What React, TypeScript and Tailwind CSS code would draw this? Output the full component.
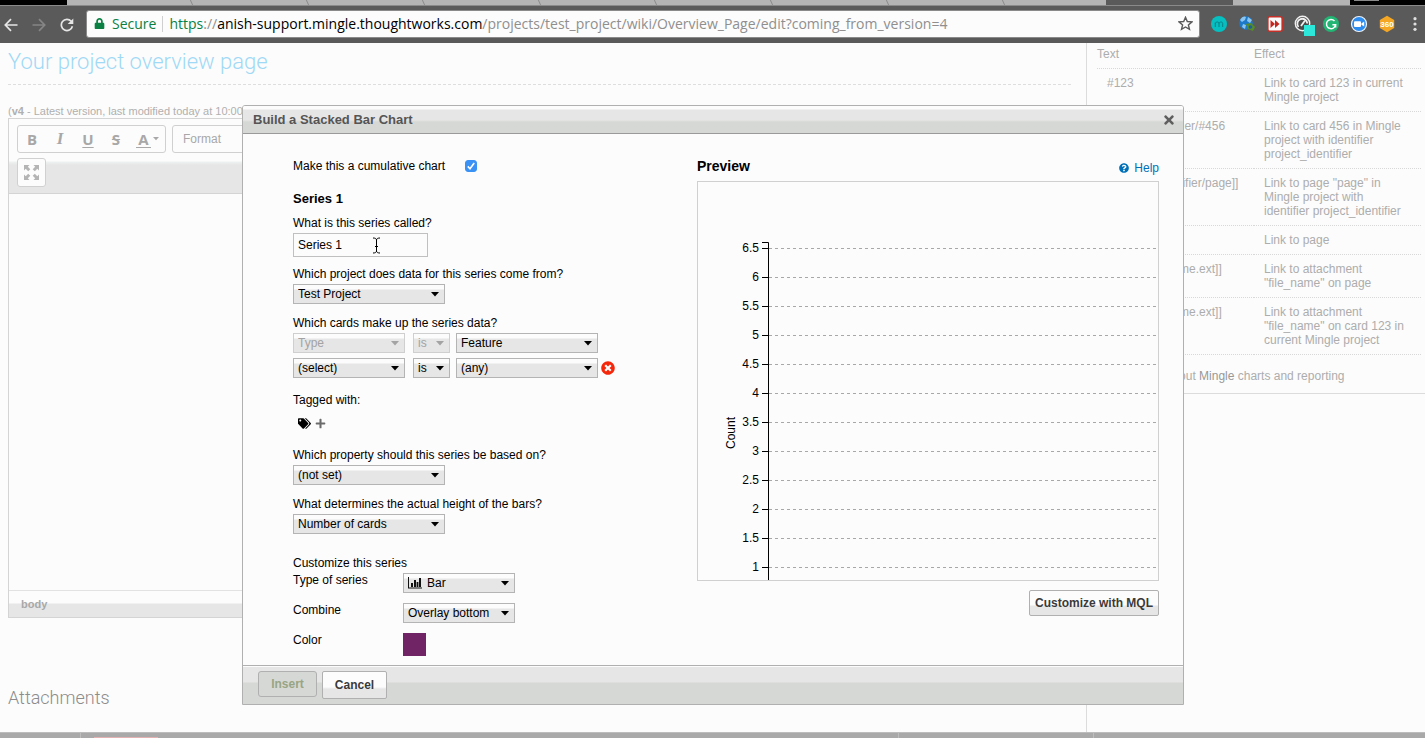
import { useState, type ReactNode } from "react";
import {
  FaLock,
  FaPlus,
  FaQuestionCircle,
  FaTags,
  FaTimes,
  FaTimesCircle,
} from "react-icons/fa";

const tabWidths = [
  "w-[125px]",
  "w-[116px]",
  "w-[116px]",
  "w-[116px]",
  "w-[116px]",
  "w-[116px]",
  "w-[116px]",
  "w-[116px]",
];

function TabStrip() {
  return (
    <div className="flex h-[5px] overflow-hidden bg-black">
      <div className="w-[67px] shrink-0" />
      <div className="flex min-w-0 flex-1 bg-[#b4b4b4]">
        {tabWidths.map((w, i) => (
          <div key={i} className={`${w} shrink-0 skew-x-[24deg] border-r border-[#8b8b8b]`} />
        ))}
      </div>
      <div className="w-[127px] shrink-0 bg-[#5a5a5a]" />
      <div className="w-[117px] shrink-0 bg-[#b4b4b4]" />
      <div className="w-[75px] shrink-0 pl-1">
        <div className="h-px w-[25px] bg-[#8a8a8a]" />
      </div>
    </div>
  );
}

function NavButton({ label, dim, children }: { label: string; dim?: boolean; children: ReactNode }) {
  return (
    <button
      type="button"
      aria-label={label}
      className={`flex size-7 shrink-0 items-center justify-center ${dim ? "text-[#858585]" : "text-[#e6e6e6]"}`}
    >
      <svg width="14" height="14" viewBox="0 0 14 14" fill="none" stroke="currentColor" strokeWidth="1.7">
        {children}
      </svg>
    </button>
  );
}

function Extension({ label, children }: { label: string; children: ReactNode }) {
  return (
    <button type="button" aria-label={label} className="flex size-7 shrink-0 items-center justify-center">
      <svg width="20" height="20" viewBox="0 0 20 20" className="overflow-visible">
        {children}
      </svg>
    </button>
  );
}

function BrowserBar() {
  return (
    <header className="shrink-0">
      <TabStrip />
      <div className="flex h-[38px] items-center border-t border-[#8a8a8a] bg-[#5a5a5a]">
        <div className="flex w-[86px] shrink-0 justify-center pr-2">
          <NavButton label="Back">
            <path d="M13.5 7H1.5M7 1.2L1.3 7L7 12.8" />
          </NavButton>
          <NavButton label="Forward" dim>
            <path d="M0.5 7H12.5M7 1.2L12.7 7L7 12.8" />
          </NavButton>
          <NavButton label="Reload">
            <path d="M12.4 8.3A5.6 5.6 0 1 1 11.2 3.3" />
            <path d="M13.3 0.4V6H7.7Z" fill="currentColor" stroke="none" />
          </NavButton>
        </div>
        <div className="mb-0.5 flex h-7 min-w-0 flex-1 items-center rounded-[3px] border border-[#8a8a8a] bg-[#fcfcfc] pr-1.5 pl-[7px] font-['Open_Sans',sans-serif] text-sm whitespace-nowrap">
          <FaLock className="mr-[7px] size-[11px] text-[#0b8043]" />
          <span className="text-[#0b8043]">Secure</span>
          <span className="mx-1.5 h-4 w-px bg-[#cfcfcf]" />
          <span className="min-w-0 flex-1 overflow-hidden text-[#8f8f8f]">
            <span className="text-[#0b8043]">https</span>://
            <span className="text-black">anish-support.mingle.thoughtworks.com</span>
            /projects/test_project/wiki/Overview_Page/edit?coming_from_version=4
          </span>
          <button type="button" aria-label="Bookmark this page">
            <svg width="15" height="15" viewBox="0 0 15 15" fill="none" stroke="#5a5a5a" strokeWidth="1.4">
              <path d="M7.5 1.3L9.3 5.5L13.9 5.9L10.4 8.9L11.5 13.4L7.5 11L3.5 13.4L4.6 8.9L1.1 5.9L5.7 5.5Z" />
            </svg>
          </button>
        </div>
        <div className="mb-0.5 flex w-[225px] shrink-0 pl-[5px]">
          <Extension label="Mercury">
            <circle cx="10" cy="10" r="8" fill="#06bfc0" />
            <path d="M6.3 13V8.5M6.3 9.5C7 7.5 10 7.5 10 9.5V13M10 9.5C10.5 7.5 13.7 7.5 13.7 9.5V13" fill="none" stroke="#077f86" />
          </Extension>
          <Extension label="Globe">
            <circle cx="9" cy="9" r="6.8" fill="#1c78c8" />
            <path d="M3 6C5 2 8 2 9 3L8 6L5 8ZM11 3L15 6L13 9L10 7ZM6 10L9 11L8 15L5 13Z" fill="#8bc5ef" />
            <path d="M9 10L14 9L18 13L16 17L11 15Z" fill="#568d27" />
            <circle cx="13.5" cy="13" r="1.8" fill="#1d5fa0" />
          </Extension>
          <Extension label="Fast forward">
            <rect x="2.8" y="2.8" width="14.4" height="14.4" rx="2" fill="#fafafa" stroke="#c43028" strokeWidth="1.6" />
            <path d="M5.5 6L10 10L5.5 14ZM10 6L14.5 10L10 14Z" fill="#c3261f" />
          </Extension>
          <Extension label="Speed">
            <circle cx="9.5" cy="9.5" r="7.2" fill="#4a4a4a" stroke="#f0f0f0" strokeWidth="1.4" />
            <path d="M5.5 13A5 5 0 1 1 14.3 9.5" fill="none" stroke="#f0f0f0" strokeWidth="1.8" />
            <path d="M8 12L12 6.5" stroke="#f0f0f0" strokeWidth="1.8" />
            <rect x="11" y="11" width="11" height="11" fill="#2de8da" />
          </Extension>
          <Extension label="Grammar">
            <circle cx="10" cy="10" r="8" fill="#22b573" />
            <path d="M13.5 7A4.6 4.6 0 1 0 14.6 10.8H11.4M14.6 10.8V13.5" fill="none" stroke="#fff" strokeWidth="1.5" />
          </Extension>
          <Extension label="Video call">
            <circle cx="10" cy="10" r="7.5" fill="#2d8cf0" stroke="#eef5fc" strokeWidth="1.2" />
            <rect x="5" y="7.3" width="7" height="5.6" rx="1" fill="#fff" />
            <path d="M12.4 9.4L15.2 7.5V12.6L12.4 10.8Z" fill="#fff" />
          </Extension>
          <Extension label="360">
            <path d="M10 1.8L17.2 5.9V14.1L10 18.2L2.8 14.1V5.9Z" fill="#f5a623" />
            <text x="10" y="13" textAnchor="middle" fontSize="8" fontWeight="700" fill="#fff" fontFamily="Liberation Sans">
              360
            </text>
          </Extension>
          <Extension label="Menu">
            <circle cx="10" cy="4.7" r="1.6" fill="#e0e0e0" />
            <circle cx="10" cy="10" r="1.6" fill="#e0e0e0" />
            <circle cx="10" cy="15.3" r="1.6" fill="#e0e0e0" />
          </Extension>
        </div>
      </div>
    </header>
  );
}

function EditorButton({ label, children }: { label: string; children: ReactNode }) {
  return (
    <button type="button" aria-label={label} className="flex size-7 shrink-0 items-center justify-center">
      {children}
    </button>
  );
}

function Editor() {
  return (
    <div className="border border-[#d4d4d4]">
      <div className="flex flex-col gap-[5px] border-b border-[#d4d4d4] bg-[linear-gradient(#fcfcfc_42px,#eef1f2_43px,#e6e6e6_46px)] px-2 pt-1.5 pb-1.5">
        <div className="flex gap-1.5">
          <div className="flex h-[28px] w-[149px] items-center rounded-[3px] border border-[#d0d0d0] bg-[#fcfcfc] font-['Open_Sans',sans-serif] text-[15px] font-bold text-[#a8a8a8]">
            <EditorButton label="Bold">B</EditorButton>
            <EditorButton label="Italic">
              <span className="font-['Liberation_Serif',serif] text-[17px] italic">I</span>
            </EditorButton>
            <EditorButton label="Underline">
              <span className="underline underline-offset-2">U</span>
            </EditorButton>
            <EditorButton label="Strikethrough">
              <span className="line-through">S</span>
            </EditorButton>
            <button type="button" aria-label="Text colour" className="flex flex-1 items-center justify-center gap-0.5">
              <span className="border-b border-[#a8a8a8] px-0.5 leading-4">A</span>
              <svg width="6" height="4" viewBox="0 0 6 4" fill="currentColor">
                <path d="M0 0H6L3 3.2Z" />
              </svg>
            </button>
          </div>
          <button
            type="button"
            className="h-[28px] w-[120px] rounded-[3px] border border-[#d0d0d0] bg-[#fcfcfc] px-2.5 text-left text-[12px] text-[#a8a8a8]"
          >
            Format
          </button>
        </div>
        <button
          type="button"
          aria-label="Maximize"
          className="flex size-[29px] items-center justify-center rounded-[3px] border border-[#d0d0d0] bg-[#fcfcfc] text-[#b4b4b4]"
        >
          <svg width="15" height="15" viewBox="0 0 15 15" fill="currentColor">
            <path d="M0 0H5.5L3.8 1.7L6.3 4.2L4.2 6.3L1.7 3.8L0 5.5ZM15 0V5.5L13.3 3.8L10.8 6.3L8.7 4.2L11.2 1.7L9.5 0ZM0 15V9.5L1.7 11.2L4.2 8.7L6.3 10.8L3.8 13.3L5.5 15ZM15 15H9.5L11.2 13.3L8.7 10.8L10.8 8.7L13.3 11.2L15 9.5Z" />
          </svg>
        </button>
      </div>
      <div contentEditable suppressContentEditableWarning aria-label="Page content" className="h-[396px]" />
      <div className="border-t border-[#e2e2e2] bg-[linear-gradient(#fcfcfc_12px,#e6e6e6_13px)] px-3 py-1.5 text-[11px] leading-[14px] font-bold text-[#a8a8a8]">
        body
      </div>
    </div>
  );
}

const syntax: [string, string][] = [
  ["#123", "Link to card 123 in current Mingle project"],
  ["project_identifier/#456", "Link to card 456 in Mingle project with identifier project_identifier"],
  ["[[project_identifier/page]]", 'Link to page "page" in Mingle project with identifier project_identifier'],
  ["[[page]]", "Link to page"],
  ["[[page/file_name.ext]]", 'Link to attachment "file_name" on page'],
  ["[[#123/file_name.ext]]", 'Link to attachment "file_name" on card 123 in current Mingle project'],
];

function SyntaxHelp() {
  return (
    <aside className="w-[339px] shrink-0 border-l border-[#dcdcdc] text-[12px] leading-[14px] text-[#adadad]">
      <div className="border-b border-[#dcdcdc] pr-1 pb-2.5 pl-2.5">
        <table className="w-full table-fixed border-collapse">
          <thead>
            <tr className="border-b border-dotted border-[#d8d8d8] text-left">
              <th className="w-[157px] pt-1 pb-[7px] font-normal">Text</th>
              <th className="pt-1 pb-[7px] font-normal">Effect</th>
            </tr>
          </thead>
          <tbody>
            {syntax.map(([text, effect]) => (
              <tr key={text} className="border-b border-dotted border-[#d8d8d8] align-top">
                <td className="px-2.5 py-[7px] whitespace-nowrap">{text}</td>
                <td className="px-2.5 py-[7px]">{effect}</td>
              </tr>
            ))}
          </tbody>
        </table>
        <p className="mt-3.5 pl-1.5">
          Read more about <a href="#mingle" className="text-[#989898]">Mingle</a> charts and reporting
        </p>
      </div>
    </aside>
  );
}

type PickProps = {
  label: string;
  value: string;
  width: string;
  disabled?: boolean;
  icon?: ReactNode;
};

function Pick({ label, value, width, disabled, icon }: PickProps) {
  return (
    <div className={`relative ${width} ${disabled ? "text-[#a3a3a3]" : "text-black"}`}>
      <select
        aria-label={label}
        disabled={disabled}
        className={`block h-5 w-full appearance-none border bg-[linear-gradient(#fcfcfc_4px,#e6e6e6_5px)] pr-5 leading-4 opacity-100 ${
          disabled ? "border-[#cfcfcf]" : "border-[#b4b4b4]"
        } ${icon ? "pl-[23px]" : "pl-1"}`}
      >
        <option>{value}</option>
      </select>
      {icon && <span className="pointer-events-none absolute top-1 left-[5px]">{icon}</span>}
      <svg width="8" height="5" viewBox="0 0 8 5" fill="currentColor" className="pointer-events-none absolute top-2 right-1.5">
        <path d="M0 0H8L4 4.6Z" />
      </svg>
    </div>
  );
}

function SeriesForm() {
  const [cumulative, setCumulative] = useState(true);
  const [name, setName] = useState("Series 1");
  return (
    <form className="flex w-[340px] flex-col text-[12px] leading-5 text-black">
      <div className="flex items-center gap-5">
        <label htmlFor="cumulative">Make this a cumulative chart</label>
        <span className="grid size-3">
          <input
            id="cumulative"
            type="checkbox"
            checked={cumulative}
            onChange={(e) => setCumulative(e.target.checked)}
            className="col-start-1 row-start-1 size-3 appearance-none rounded-[3px] border border-[#3a92f5] checked:bg-[#3a92f5]"
          />
          {cumulative && (
            <svg viewBox="0 0 12 12" fill="none" stroke="#fff" strokeWidth="1.6" className="pointer-events-none col-start-1 row-start-1">
              <path d="M2.8 6.4L5 8.8L9.2 3" />
            </svg>
          )}
        </span>
      </div>

      <h2 className="mt-[13px] text-[13px] font-bold">Series 1</h2>

      <label htmlFor="series-name" className="mt-1">What is this series called?</label>
      <div className="relative w-[135px]">
        <input
          id="series-name"
          value={name}
          onChange={(e) => setName(e.target.value)}
          className="block h-6 w-full border border-[#c0c0c0] bg-[#fcfcfc] px-1"
        />
        <svg width="9" height="17" viewBox="0 0 9 17" fill="none" stroke="#000" className="pointer-events-none absolute top-1 left-[79px]">
          <path d="M1 1C3 1 4.5 1.5 4.5 3V14C4.5 15.5 3 16 1 16M8 1C6 1 4.5 1.5 4.5 3M8 16C6 16 4.5 15.5 4.5 14M3 9.5H6" />
        </svg>
      </div>

      <p className="mt-[7px]">Which project does data for this series come from?</p>
      <Pick label="Project" value="Test Project" width="w-[152px]" />

      <p className="mt-[9px]">Which cards make up the series data?</p>
      <div className="flex items-center">
        <Pick label="Property" value="Type" width="w-[112px]" disabled />
        <span className="w-2" />
        <Pick label="Operator" value="is" width="w-[37px]" disabled />
        <span className="w-1.5" />
        <Pick label="Value" value="Feature" width="w-[142px]" />
      </div>
      <div className="mt-[5px] flex items-center">
        <Pick label="Second property" value="(select)" width="w-[112px]" />
        <span className="w-2" />
        <Pick label="Second operator" value="is" width="w-[37px]" />
        <span className="w-1.5" />
        <Pick label="Second value" value="(any)" width="w-[142px]" />
        <button type="button" aria-label="Remove condition" className="ml-[3px] text-[#f5270b]">
          <FaTimesCircle className="size-3.5" />
        </button>
      </div>

      <p className="mt-3">Tagged with:</p>
      <div className="mt-[3px] flex h-5 items-center gap-1 pl-[5px]">
        <FaTags className="size-[13px] text-black" />
        <button type="button" aria-label="Add tag">
          <FaPlus className="size-[11px] text-[#6b6b6b]" />
        </button>
      </div>

      <p className="mt-3">Which property should this series be based on?</p>
      <Pick label="Based on" value="(not set)" width="w-[152px]" />

      <p className="mt-[9px]">What determines the actual height of the bars?</p>
      <Pick label="Bar height" value="Number of cards" width="w-[152px]" />

      <p className="mt-[19px]">Customize this series</p>
      <div className="grid grid-cols-[110px_auto] items-start gap-y-2.5 leading-[14px]">
        <span>Type of series</span>
        <Pick
          label="Type of series"
          value="Bar"
          width="w-[112px]"
          icon={
            <svg width="15" height="12" viewBox="0 0 15 12" fill="#111">
              <path d="M0 0H1V10.5H14V11.5H0ZM3 6H5V10H3ZM6 3H8V10H6ZM8.6 5H10.4V10H8.6ZM11 1H13V10H11Z" />
            </svg>
          }
        />
        <span>Combine</span>
        <Pick label="Combine" value="Overlay bottom" width="w-[112px]" />
        <span>Color</span>
        <button type="button" aria-label="Series color" className="size-[23px] bg-[#702465]" />
      </div>
    </form>
  );
}

const ticks = [6.5, 6, 5.5, 5, 4.5, 4, 3.5, 3, 2.5, 2, 1.5, 1];

function Preview() {
  return (
    <section className="w-[462px]">
      <div className="flex h-5 items-center justify-between">
        <h2 className="text-[14px] font-bold text-black">Preview</h2>
        <a href="#help" className="flex items-center gap-[5px] pt-1 text-[12px] text-[#0071b8]">
          <FaQuestionCircle className="size-2.5" />
          Help
        </a>
      </div>
      <div className="mt-[5px] h-[400px] overflow-hidden border border-[#d0d0d0]">
        <svg width="460" height="398" viewBox="0 0 460 398" fontFamily="Liberation Sans" fontSize="12" fill="#000">
          {ticks.map((t, i) => {
            const y = 66.5 + i * 29;
            return (
              <g key={t}>
                <line x1="71" x2="458" y1={y} y2={y} stroke="#a8a8a8" strokeDasharray="3 3" />
                <line x1="64" x2="70" y1={y} y2={y} stroke="#000" />
                <text x="61" y={y + 3.5} textAnchor="end">{t}</text>
              </g>
            );
          })}
          <path d="M64 60.5H70.5V398" fill="none" stroke="#000" />
          <text transform="translate(37 251) rotate(-90)" textAnchor="middle">Count</text>
        </svg>
      </div>
      <div className="mt-[9px] flex justify-end">
        <button
          type="button"
          className="h-[26px] w-[130px] rounded-[2px] border border-[#b0b0b0] bg-[linear-gradient(#fcfcfc_14px,#e6e6e6_15px)] text-[12px] font-bold whitespace-nowrap text-[#3a3a3a]"
        >
          Customize with MQL
        </button>
      </div>
    </section>
  );
}

function ChartDialog() {
  return (
    <div className="fixed inset-0 flex items-start justify-center pt-[105px] pl-px">
      <div
        role="dialog"
        aria-labelledby="dialog-title"
        className="w-full max-w-[942px] rounded-t-[3px] border border-[#b0b0b0] bg-[#fcfcfc]"
      >
        <div className="flex h-7 items-center justify-between rounded-t-[2px] border-b border-[#9a9a9a] bg-[linear-gradient(#fcfcfc_3px,#e6e6e6_4px,#e6e6e6_14px,#d6d8d5_16px)] pr-[7px] pl-2.5">
          <h1 id="dialog-title" className="text-[13px] font-bold text-[#555]">Build a Stacked Bar Chart</h1>
          <button type="button" aria-label="Close" className="text-[#5f5f5f]">
            <FaTimes className="size-3.5" />
          </button>
        </div>
        <div className="flex justify-between pt-[22px] pr-6 pb-[9px] pl-[50px]">
          <SeriesForm />
          <Preview />
        </div>
        <div className="flex gap-[5px] border-t border-[#b0b0b0] bg-[linear-gradient(#fcfcfc_1px,#e6e6e6_1px,#e6e6e6_16px,#d6d8d5_17px)] px-[15px] py-[5px] text-[12px] font-bold">
          <button type="button" disabled className="h-[26px] w-[59px] rounded-[3px] border border-[#b0b0b0] bg-[#d6d8d5] text-[#98a585]">
            Insert
          </button>
          <button type="button" className="h-7 w-[65px] rounded-[2px] border border-[#b0b0b0] bg-[linear-gradient(#fcfcfc_15px,#e6e6e6_17px)] text-[#3a3a3a]">
            Cancel
          </button>
        </div>
      </div>
    </div>
  );
}

export default function App() {
  return (
    <div className="flex h-screen flex-col overflow-hidden bg-[#fcfcfc] font-['Liberation_Sans',Arial,sans-serif]">
      <BrowserBar />
      <div className="flex min-h-0 flex-1 overflow-hidden">
        <main className="min-w-0 flex-1 pr-[15px] pl-2">
          <h1 className="border-b border-dashed border-[#dedede] pt-1 pb-[7px] font-['Roboto',sans-serif] text-[22px] leading-[30px] font-light text-[#9fd9f6]">
            Your project overview page
          </h1>
          <p className="mt-[19px] text-[11px] leading-[14px] text-[#b0b0b0]">
            (<b>v4</b> - Latest version, last modified today at 10:00)
          </p>
          <Editor />
          <h2 className="mt-[68px] font-['Roboto',sans-serif] text-[18px] leading-6 font-light text-[#8c8c8c]">Attachments</h2>
        </main>
        <SyntaxHelp />
      </div>
      <footer className="flex h-1.5 shrink-0 items-end border-t border-[#bcbcbc] bg-[#a9a9a9]">
        <div className="h-full w-[81px] border-r border-[#bdbdbd]" />
        <div className="ml-[13px] h-px w-[64px] bg-[#e3b1b1]" />
        <div className="ml-[740px] h-full w-[196px] border-x border-[#bdbdbd]" />
      </footer>
      <ChartDialog />
    </div>
  );
}
